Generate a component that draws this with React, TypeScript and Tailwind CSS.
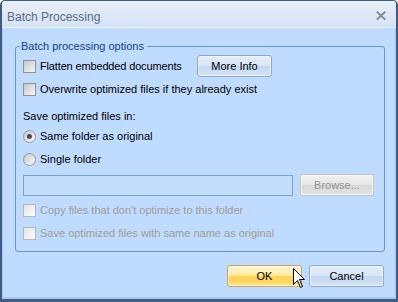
import React from "react";

function Check({ disabled }: { disabled?: boolean }) {
  return disabled ? (
    <span className="block w-[13px] h-[13px] shrink-0 border border-[#b7b7b7] bg-linear-to-br from-[#e4e4e4] to-[#fcfcfc]" />
  ) : (
    <span className="block w-[13px] h-[13px] shrink-0 border border-[#8f9192] bg-linear-to-br from-[#c4c6c9] to-[#f8f8f8]" />
  );
}

function Radio({ selected }: { selected?: boolean }) {
  return (
    <span className="flex items-center justify-center w-[13px] h-[13px] shrink-0 rounded-full border border-[#979a9d] bg-linear-to-br from-[#c4c6c9] to-[#fbfbfb]">
      {selected ? (
        <span className="block w-[5px] h-[5px] rounded-full bg-linear-to-br from-[#2e2e2e] to-[#6a6a6a]" />
      ) : null}
    </span>
  );
}

function BlueButton({ label, w }: { label: string; w: string }) {
  return (
    <div
      className={`${w} h-[22px] flex items-center justify-center rounded-[3px] border border-[#8ea9cf] text-black bg-[linear-gradient(to_bottom,#e4eefb_0%,#d7e5f7_48%,#c4d8f1_52%,#d4e4f8_100%)] shadow-[inset_0_0_0_1px_rgba(255,255,255,0.55)]`}
    >
      {label}
    </div>
  );
}

function Cursor() {
  return (
    <svg
      className="absolute left-[292px] top-[267px]"
      width="14"
      height="23"
      viewBox="0 0 14 23"
    >
      <path
        d="M1.5 1.5 L1.5 17.5 L5.5 13.5 L8.5 20.5 L10.5 19.5 L7.5 12.5 L12.5 12.5 Z"
        fill="#ffffff"
        stroke="#000000"
        strokeWidth="1"
        strokeLinejoin="miter"
      />
    </svg>
  );
}

export default function App() {
  return (
    <div className="relative w-[398px] h-[302px] bg-white font-['Liberation_Sans',Arial,sans-serif] text-[11px] leading-[13px] text-black">
      <div className="flex flex-col w-full h-full rounded-t-[5px] overflow-hidden border-x-2 border-t border-b-[3px] border-[#3d5b85] bg-[#bfdbff]">
        {/* Title bar */}
        <div className="flex items-start justify-between h-[27px] shrink-0 pl-[5px] pr-[10px] pt-[9px] border-b border-[#e9f1fb] bg-[linear-gradient(to_bottom,#e8eff9_0%,#dfe9f6_50%,#d4e3f5_100%)]">
          <span className="text-[12px] leading-[15px] text-[#5a6b84]">Batch Processing</span>
          <svg width="10" height="10" viewBox="0 0 10 10" className="mt-[1px]">
            <path d="M1.5 2 L8.5 8.5 M8.5 2 L1.5 8.5" stroke="#eef4fb" strokeWidth="2" strokeLinecap="square" transform="translate(0,0.9)" />
            <path d="M1.5 1.5 L8.5 8 M8.5 1.5 L1.5 8" stroke="#7d8ca1" strokeWidth="2" strokeLinecap="square" />
          </svg>
        </div>

        {/* Body */}
        <div className="flex flex-col flex-1 border-x border-b-2 border-[#a9c8ef]">
          <fieldset className="mt-[12px] ml-[12px] mr-[11px] rounded-[3px] border border-[#6893cf] pl-[7px] pr-[10px] pt-[2px] pb-[11px]">
            <legend className="ml-[-3px] pl-[1px] pr-[3px] text-[#15428b] leading-[13px]">
              Batch processing options
            </legend>

            <div className="flex items-center h-[22px]">
              <div className="flex items-center gap-[4px] w-[174px]">
                <Check />
                <span className="tracking-[-0.15px]">Flatten embedded documents</span>
              </div>
              <BlueButton label="More Info" w="w-[75px]" />
            </div>

            <div className="flex items-center gap-[4px] h-[21px] mt-[2px]">
              <Check />
              <span>Overwrite optimized files if they already exist</span>
            </div>

            <div className="flex items-center h-[16px] mt-[8px]">
              <span>Save optimized files in:</span>
            </div>

            <div className="flex items-center gap-[4px] h-[15px] mt-[5px]">
              <Radio selected />
              <span>Same folder as original</span>
            </div>

            <div className="flex items-center gap-[4px] h-[15px] mt-[8px]">
              <Radio />
              <span>Single folder</span>
            </div>

            <div className="flex items-end gap-[7px] h-[22px] mt-[7px]">
              <div className="w-[270px] h-[21px] border border-[#7aa1d3] bg-[#c3ddfd]" />
              <div className="w-[74px] h-[22px] flex items-center justify-center rounded-[2px] border border-[#c6c6c6] text-[#959595] bg-[linear-gradient(to_bottom,#f1f1f1_0%,#e6e6e6_48%,#d7d7d7_52%,#e4e4e4_100%)] shadow-[inset_0_0_0_1px_rgba(255,255,255,0.6)]">
                Browse...
              </div>
            </div>

            <div className="flex items-center gap-[4px] h-[15px] mt-[7px] text-[#a09e96]">
              <Check disabled />
              <span>Copy files that don't optimize to this folder</span>
            </div>

            <div className="flex items-center gap-[4px] h-[14px] mt-[8px] text-[#a09e96]">
              <Check disabled />
              <span>Save optimized files with same name as original</span>
            </div>
          </fieldset>

          <div className="flex justify-end gap-[7px] mt-[13px] mr-[11px]">
            <div className="w-[75px] h-[22px] flex items-center justify-center rounded-[3px] border border-[#c4a66a] text-black bg-[linear-gradient(to_bottom,#fff6d2_0%,#ffeaa6_45%,#ffd452_52%,#ffd75e_80%,#ffe89c_100%)] shadow-[inset_0_0_0_1px_rgba(255,255,255,0.5)]">
              OK
            </div>
            <BlueButton label="Cancel" w="w-[75px]" />
          </div>
        </div>
      </div>
      <Cursor />
    </div>
  );
}
